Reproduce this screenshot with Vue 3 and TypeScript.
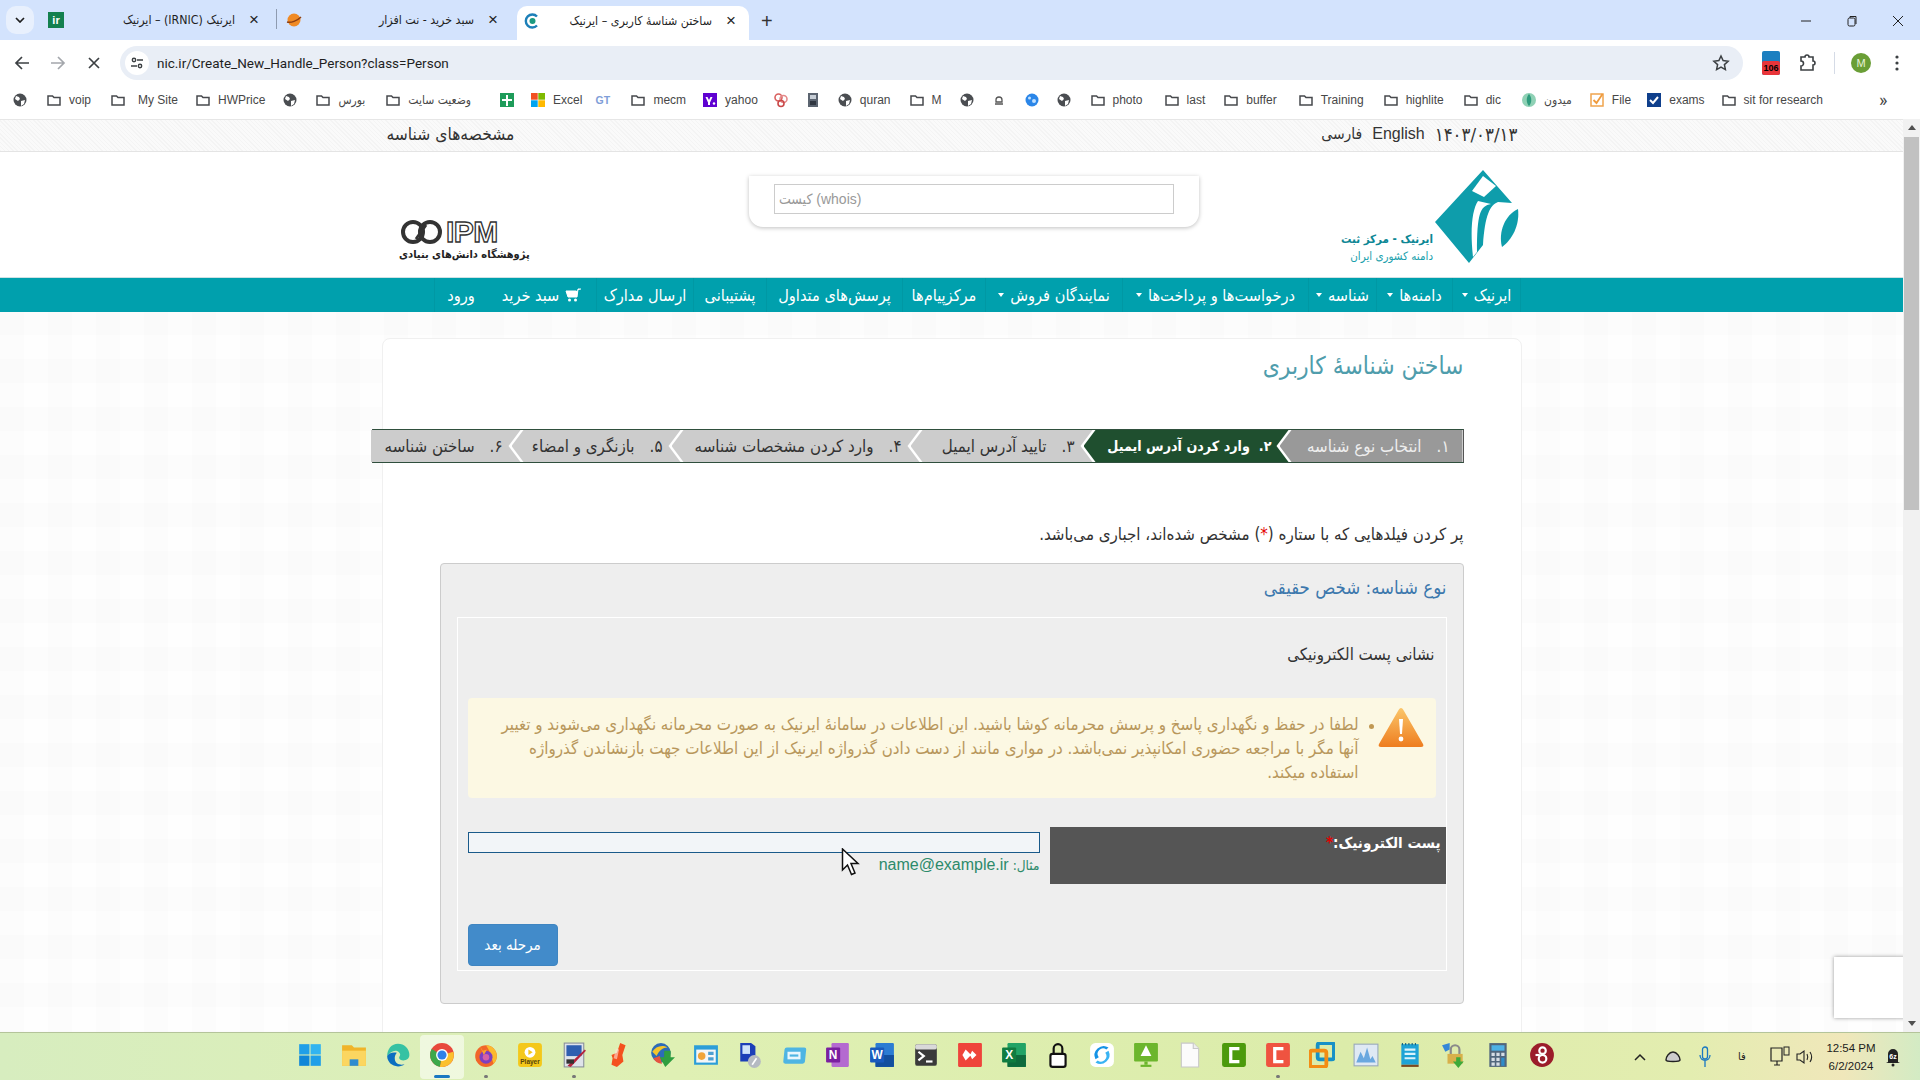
<script setup lang="ts">
interface Bookmark {
  icon: string
  label?: string
  gap: number
  pad?: number
}

const folder = '<path d="M2 4h4.5l1.5 1.6h6V13H2z" fill="none" stroke="#47494d" stroke-width="1.5"/>'
const globe = '<circle cx="8" cy="8" r="6.5" fill="#4a4d51"/><path d="M4 4l3 1 1 2-2 2-3-2zM9 9l4-1-1 4-3 2z" fill="#fff"/>'
const bookmarkIcons: Record<string, string> = {
  folder,
  globe,
  sheet: '<rect x="1" y="1" width="14" height="14" fill="#1e9c5a"/><path d="M7 3h2v4h4v2H9v5H7V9H3V7h4z" fill="#fff"/>',
  ms: '<rect x="1" y="1" width="6.7" height="6.7" fill="#f25022"/><rect x="8.3" y="1" width="6.7" height="6.7" fill="#7fba00"/><rect x="1" y="8.3" width="6.7" height="6.7" fill="#00a4ef"/><rect x="8.3" y="8.3" width="6.7" height="6.7" fill="#ffb900"/>',
  gt: '<text x="0.500" y="12" font-size="10.500" font-family="Liberation Sans" font-weight="700" fill="#7f9ed8">GT</text>',
  yahoo: '<rect x="1" y="1" width="14" height="14" fill="#5f01d1"/><path d="M3.500 5h2l1.500 3 1.500-3h2L8 10.500V13H6v-2.500z" fill="#fff"/><circle cx="12" cy="11.500" r="1.200" fill="#fff"/>',
  rings: '<circle cx="5.500" cy="5.500" r="3.500" fill="none" stroke="#d9605f" stroke-width="1.600"/><circle cx="10.500" cy="7" r="3.500" fill="none" stroke="#e58a8a" stroke-width="1.600"/><circle cx="8" cy="11.500" r="3" fill="none" stroke="#c94848" stroke-width="1.600"/>',
  film: '<rect x="3" y="1" width="10" height="14" fill="#5b6470"/><rect x="5" y="3" width="6" height="4" fill="#c7ced6"/><rect x="5" y="9" width="6" height="4" fill="#2f3640"/>',
  masjid: '<path d="M5 8a3 3 0 0 1 6 0v2H5z" fill="none" stroke="#555" stroke-width="1.300"/><path d="M4 12h8" stroke="#555" stroke-width="1.500"/>',
  dots: '<circle cx="8" cy="8" r="6.500" fill="#2b86e8"/><circle cx="5.500" cy="6" r="1.500" fill="#bfe0ff"/><circle cx="10" cy="9" r="2" fill="#bfe0ff"/>',
  leaf: '<circle cx="8" cy="8" r="7" fill="#8fd1b5"/><path d="M8 2c3 3 3 9 0 12-3-3-3-9 0-12z" fill="#2e9c7d"/>',
  check: '<rect x="2" y="2" width="12" height="12" fill="#fff" stroke="#f0a44d" stroke-width="1.500"/><path d="M4.500 8l3 3 6-9" fill="none" stroke="#ef9a3c" stroke-width="1.800"/>',
  exams: '<rect x="1" y="1" width="14" height="14" fill="#0f3f8c"/><path d="M4 8l3 3 5-6" fill="none" stroke="#fff" stroke-width="2"/>',
}

const bookmarks: Bookmark[] = [
  { icon: 'globe', gap: 18 },
  { icon: 'folder', label: 'voip', gap: 19 },
  { icon: 'folder', label: 'My Site', gap: 17, pad: 5 },
  { icon: 'folder', label: 'HWPrice', gap: 17 },
  { icon: 'globe', gap: 17 },
  { icon: 'folder', label: 'بورس', gap: 20 },
  { icon: 'folder', label: 'وضعیت سایت', gap: 28 },
  { icon: 'sheet', gap: 15 },
  { icon: 'ms', label: 'Excel', gap: 13 },
  { icon: 'gt', gap: 19 },
  { icon: 'folder', label: 'mecm', gap: 16 },
  { icon: 'yahoo', label: 'yahoo', gap: 15 },
  { icon: 'rings', gap: 16 },
  { icon: 'film', gap: 16 },
  { icon: 'globe', label: 'quran', gap: 18 },
  { icon: 'folder', label: 'M', gap: 17 },
  { icon: 'globe', gap: 16 },
  { icon: 'masjid', gap: 17 },
  { icon: 'dots', gap: 16 },
  { icon: 'globe', gap: 18 },
  { icon: 'folder', label: 'photo', gap: 21 },
  { icon: 'folder', label: 'last', gap: 18 },
  { icon: 'folder', label: 'buffer', gap: 21 },
  { icon: 'folder', label: 'Training', gap: 19 },
  { icon: 'folder', label: 'highlite', gap: 19 },
  { icon: 'folder', label: 'dic', gap: 20 },
  { icon: 'leaf', label: 'میدون', gap: 17 },
  { icon: 'check', label: 'File', gap: 15 },
  { icon: 'exams', label: 'exams', gap: 16 },
  { icon: 'folder', label: 'sit for research', gap: 0 },
]

const navItems = [
  { label: 'ایرنیک', caret: true },
  { label: 'دامنه‌ها', caret: true },
  { label: 'شناسه', caret: true },
  { label: 'درخواست‌ها و پرداخت‌ها', caret: true },
  { label: 'نمایندگان فروش', caret: true },
  { label: 'مرکزپیام‌ها', caret: false },
  { label: 'پرسش‌های متداول', caret: false },
  { label: 'پشتیبانی', caret: false },
  { label: 'ارسال مدارک', caret: false },
  { label: 'سبد خرید', caret: false, cart: true },
  { label: 'ورود', caret: false },
]

const steps = [
  { num: '۱.', label: 'انتخاب نوع شناسه', width: 183, state: 'done' },
  { num: '۲.', label: 'وارد کردن آدرس ایمیل', width: 205, state: 'active' },
  { num: '۳.', label: 'تایید آدرس ایمیل', width: 182, state: '' },
  { num: '۴.', label: 'وارد کردن مشخصات شناسه', width: 248, state: '' },
  { num: '۵.', label: 'بازنگری و امضاء', width: 169, state: '' },
  { num: '۶.', label: 'ساختن شناسه', width: 150, state: '' },
]

const taskIcons = [
  { svg: '<rect x="2" y="2" width="9.500" height="9.500" fill="#1f9fe8"/><rect x="12.500" y="2" width="9.500" height="9.500" fill="#32b4f0"/><rect x="2" y="12.500" width="9.500" height="9.500" fill="#0f86d8"/><rect x="12.500" y="12.500" width="9.500" height="9.500" fill="#1f9fe8"/>' },
  { svg: '<path d="M1 3h9l2 2h11v17H1z" fill="#f0b429"/><path d="M1 8h22v14H1z" fill="#fbd660"/><rect x="8" y="16" width="8" height="6" fill="#2e8ccf"/>' },
  { svg: '<path d="M12 1.500a10.500 10.500 0 0 1 10.500 10.500c0 3-2.500 5-5.500 5-2 0-4-1-4-2.500 0-1 1-1.500 1-3S12 8 9.500 8 4 10 2 13C2 6.500 6 1.500 12 1.500z" fill="#36c2a3"/><path d="M2 13c0 5.500 4.500 9.500 10 9.500 2.500 0 4.500-.8 6-2-3 1-9 .5-9-5.500 0-3 2-5 2-5-4-1-8 .5-9 3z" fill="#0b6fc0"/>' },
  { svg: '<circle cx="12" cy="12" r="11" fill="#e8483b"/><path d="M12 12L22.500 9A11 11 0 0 1 10 22.800z" fill="#fbc02d"/><path d="M12 12L10 22.800A11 11 0 0 1 2.500 6.500z" fill="#3da84a"/><circle cx="12" cy="12" r="5.500" fill="#fff"/><circle cx="12" cy="12" r="4.200" fill="#2f80e8"/>', dot: 'active' },
  { svg: '<circle cx="12" cy="13" r="10" fill="#f1662a"/><path d="M12 3a10 10 0 0 1 10 10c0 3-1 5-3 7L15 8z" fill="#fbb92f"/><circle cx="12" cy="14" r="6" fill="#7d3fc0"/><circle cx="12" cy="14" r="3" fill="#d65fa6"/><path d="M6 3l3 5 4-1-3 5z" fill="#f9a22b"/>', dot: 'dot' },
  { svg: '<rect x="1" y="1" width="22" height="22" rx="3" fill="#f4c81a"/><circle cx="12" cy="9.500" r="5" fill="#fff"/><path d="M10.500 7l4 2.500-4 2.500z" fill="#f4c81a"/><text x="12" y="20" text-anchor="middle" font-size="6" font-family="Liberation Sans" font-weight="700" fill="#54430a">Player</text>' },
  { svg: '<rect x="3" y="1" width="18" height="22" fill="#dfe3ea" stroke="#89909c"/><rect x="5" y="3" width="14" height="10" fill="#2f5fb0"/><path d="M6 22L22 7l1 1L9 23z" fill="#b5233c"/><rect x="5" y="16" width="7" height="4" fill="#333"/>', dot: 'dot' },
  { svg: '<path d="M14 1l5 2-3 9 1 6-6 5-5-2 1-6-1-3 5-2z" fill="#f4511e"/><path d="M10 6l3 1-2 9-3-1z" fill="#ffe2d6" opacity=".6"/>' },
  { svg: '<circle cx="11" cy="10" r="9" fill="#2c6bb8"/><path d="M3 9c3-5 9-7 14-4-4 0-8 3-10 8z" fill="#f4c52c"/><path d="M4 15c2 3 4 5 8 5l-2-7z" fill="#e65340"/><path d="M10 14h4V8h6v6h4l-9 9z" fill="#2f9e3f"/>' },
  { svg: '<rect x="1" y="3" width="22" height="18" fill="#2c9ed8"/><rect x="3" y="7" width="18" height="12" fill="#f4f6f7"/><circle cx="8" cy="13" r="3.500" fill="#f0a43a"/><path d="M14 9h5v3h-5zM14 14h5v3h-5z" fill="#4d9fd1"/>' },
  { svg: '<path d="M3 1h10l4 3v14H3z" fill="#1c3fb8"/><path d="M5 3h7v8H5z" fill="#cfe3fb"/><circle cx="16" cy="18" r="6" fill="#b5bac2"/><path d="M14 21l4-6" stroke="#fff" stroke-width="1.500"/>' },
  { svg: '<rect x="2" y="5" width="20" height="15" rx="2" fill="#4eb5e3" transform="skewX(-6) translate(2 0)"/><rect x="6" y="9" width="12" height="7" fill="#e9f7fd"/><rect x="8" y="11.500" width="8" height="2" fill="#4eb5e3"/>' },
  { svg: '<rect x="6" y="1" width="16" height="22" rx="1" fill="#b46ad0"/><rect x="1" y="5" width="13" height="14" rx="1" fill="#7a1fa0"/><text x="7.500" y="16" text-anchor="middle" font-size="11" font-family="Liberation Sans" font-weight="700" fill="#fff">N</text>' },
  { svg: '<rect x="6" y="1" width="17" height="22" rx="1" fill="#2b7cd3"/><rect x="6" y="12" width="17" height="11" fill="#124f9e"/><rect x="1" y="5" width="13" height="14" rx="1" fill="#185abd"/><text x="7.500" y="16" text-anchor="middle" font-size="11" font-family="Liberation Sans" font-weight="700" fill="#fff">W</text>' },
  { svg: '<rect x="2" y="2" width="20" height="20" rx="2" fill="#3a3a3a"/><rect x="2" y="2" width="20" height="5" rx="2" fill="#d9d9d9"/><path d="M5 9l5 4-5 4" fill="none" stroke="#fff" stroke-width="2"/><path d="M12 18h6" stroke="#fff" stroke-width="2"/>' },
  { svg: '<rect x="1" y="1" width="22" height="22" rx="1" fill="#ef443b"/><path d="M8 7l5 5-5 5-3-5zM14 8l4 4-4 4-2-4z" fill="#fff"/>' },
  { svg: '<rect x="6" y="1" width="17" height="22" rx="1" fill="#21a366"/><rect x="6" y="12" width="17" height="11" fill="#0e6b3d"/><rect x="1" y="5" width="13" height="14" rx="1" fill="#107c41"/><text x="7.500" y="16" text-anchor="middle" font-size="11" font-family="Liberation Sans" font-weight="700" fill="#fff">X</text>' },
  { svg: '<path d="M8 11V6a4 4 0 0 1 8 0v5" fill="none" stroke="#111" stroke-width="2"/><rect x="5" y="11" width="14" height="12" rx="2" fill="#fff" stroke="#111" stroke-width="2"/>' },
  { svg: '<rect x="1" y="1" width="22" height="22" rx="5" fill="#fff"/><path d="M18 5a8.500 8.500 0 0 0-12 11l3-2a5 5 0 0 1 7-7z" fill="#1593e6"/><path d="M6 19a8.500 8.500 0 0 0 12-11l-3 2a5 5 0 0 1-7 7z" fill="#39b3f3"/>' },
  { svg: '<rect x="1" y="1" width="22" height="17" rx="1" fill="#6cb62d"/><path d="M12 3l5 10H7z" fill="#fff"/><rect x="10.500" y="18" width="3" height="3" fill="#6cb62d"/><rect x="7" y="21" width="10" height="2" fill="#6cb62d"/>' },
  { svg: '<path d="M4 1h11l5 5v17H4z" fill="#fbfbfb" stroke="#c8c8c8"/><path d="M15 1v5h5" fill="#eee" stroke="#c8c8c8"/>' },
  { svg: '<rect x="1" y="1" width="22" height="22" rx="2" fill="#4c9a0c"/><path d="M17 6h-8v12h8" fill="none" stroke="#fff" stroke-width="3"/>' },
  { svg: '<rect x="1" y="1" width="22" height="22" rx="2" fill="#ef5340"/><path d="M17 6h-8v12h8" fill="none" stroke="#fff" stroke-width="3"/>', dot: 'dot' },
  { svg: '<rect x="8" y="1" width="15" height="15" rx="2" fill="none" stroke="#1791c7" stroke-width="3.500"/><rect x="1" y="8" width="15" height="15" rx="2" fill="none" stroke="#f38d14" stroke-width="3.500"/>' },
  { svg: '<rect x="1" y="2" width="22" height="20" fill="#dfe9f4" stroke="#97a8bc"/><path d="M3 19l4-10 3 6 3-10 3 11 2-3 3 6z" fill="#6aa8df"/>' },
  { svg: '<rect x="4" y="2" width="16" height="19" fill="#1ea3d6"/><rect x="4" y="21" width="16" height="2" fill="#7b4a21"/><path d="M7 7h10M7 11h10M7 15h10" stroke="#d9f3fc" stroke-width="2"/><path d="M5 1v2M8 1v2M11 1v2M14 1v2M17 1v2" stroke="#125e80"/>' },
  { svg: '<path d="M1 3l7-2v6L4 9z" fill="#3487d8"/><path d="M9 11V7a4 4 0 0 1 8 0v4" fill="none" stroke="#8a8a8a" stroke-width="2"/><rect x="6" y="11" width="14" height="9" fill="#d8b04a"/><path d="M14 14h4v4h3l-5 6-5-6h3z" fill="#3eaa3a"/>' },
  { svg: '<rect x="4" y="1" width="16" height="22" fill="#50667c"/><rect x="6" y="3" width="12" height="5" fill="#4db2e6"/><path d="M6 10h3v3H6zM10.500 10h3v3h-3zM15 10h3v3h-3zM6 14.500h3v3H6zM10.500 14.500h3v3h-3zM6 19h3v3H6zM10.500 19h3v3h-3z" fill="#d5dde5"/><rect x="15" y="14.500" width="3" height="7.500" fill="#2e8cc9"/>' },
  { svg: '<circle cx="12" cy="12" r="11" fill="#9b1c2a"/><circle cx="12.500" cy="8" r="3" fill="none" stroke="#fff" stroke-width="2"/><circle cx="12.500" cy="15.500" r="3.500" fill="none" stroke="#fff" stroke-width="2"/><path d="M6 12h4" stroke="#fff" stroke-width="2"/>' },
]
</script>

<template>
  <div class="screen">
    <div class="tabstrip">
      <div class="tab-menu">
        <svg width="10" height="6" viewBox="0 0 10 6"><path d="M1 1l4 4 4-4" fill="none" stroke="#1f1f1f" stroke-width="1.700" /></svg>
      </div>
      <div class="tab tab--one">
        <span class="fav fav--ir">ir</span>
        <span class="tab-title">ایرنیک (IRNIC) – ایرنیک</span>
        <span class="tab-close">×</span>
      </div>
      <i class="tab-sep"></i>
      <div class="tab tab--two">
        <svg class="fav" width="16" height="16" viewBox="0 0 16 16"><circle cx="8" cy="8" r="6.500" fill="#f08a24" /><path d="M1 10c4 1 10-1 14-5" fill="none" stroke="#8d3f12" stroke-width="1.500" /></svg>
        <span class="tab-title">سبد خرید - نت افزار</span>
        <span class="tab-close">×</span>
      </div>
      <div class="tab tab--active">
        <svg class="fav" width="16" height="16" viewBox="0 0 16 16"><path d="M13 3.500a6.500 6.500 0 1 0 0 9" fill="none" stroke="#1c7fb8" stroke-width="2.400" /><circle cx="8.500" cy="8" r="3" fill="#1d9a80" /></svg>
        <span class="tab-title">ساختن شناسهٔ کاربری – ایرنیک</span>
        <span class="tab-close">×</span>
      </div>
      <span class="tab-new">+</span>
      <div class="win-controls">
        <svg width="12" height="12" viewBox="0 0 12 12"><path d="M1 6h10" stroke="#222" /></svg>
        <svg width="12" height="12" viewBox="0 0 12 12"><rect x="2" y="3" width="7" height="8" rx="1.500" fill="none" stroke="#222" /><path d="M4 3V1.500h6V9" fill="none" stroke="#222" /></svg>
        <svg width="12" height="12" viewBox="0 0 12 12"><path d="M1 1l10 10M11 1L1 11" stroke="#222" /></svg>
      </div>
    </div>

    <div class="toolbar">
      <svg class="tool" width="16" height="16" viewBox="0 0 16 16"><path d="M15 8H2M8 2L2 8l6 6" fill="none" stroke="#3c4043" stroke-width="1.700" /></svg>
      <svg class="tool" width="16" height="16" viewBox="0 0 16 16"><path d="M1 8h13M8 2l6 6-6 6" fill="none" stroke="#a4a7ac" stroke-width="1.700" /></svg>
      <svg class="tool" width="16" height="16" viewBox="0 0 16 16"><path d="M3 3l10 10M13 3L3 13" fill="none" stroke="#3c4043" stroke-width="1.700" /></svg>
      <div class="omnibox">
        <span class="site-btn">
          <svg width="16" height="16" viewBox="0 0 16 16"><g fill="none" stroke="#3c4043" stroke-width="1.400"><circle cx="5" cy="5" r="1.700" /><path d="M8 5h6M2 11h6" /><circle cx="11" cy="11" r="1.700" /></g></svg>
        </span>
        <span class="url">nic.ir/Create_New_Handle_Person?class=Person</span>
        <svg class="star" width="18" height="18" viewBox="0 0 18 18"><path d="M9 2l2.100 4.600 5 .6-3.700 3.400 1 5L9 13.100 4.600 15.600l1-5L1.900 7.200l5-.6z" fill="none" stroke="#3c4043" stroke-width="1.500" /></svg>
      </div>
      <div class="ext ext--badge"><i></i><b>106</b></div>
      <svg class="ext" width="18" height="20" viewBox="0 0 18 20"><path d="M3 4h4a2 2 0 0 1 4 0h4v4a2 2 0 0 1 0 4v5H3v-4a2 2 0 0 0 0-5z" fill="none" stroke="#3c4043" stroke-width="1.600" /></svg>
      <i class="tool-sep"></i>
      <span class="avatar">M</span>
      <svg class="kebab" width="4" height="16" viewBox="0 0 4 16"><circle cx="2" cy="2" r="1.600" fill="#3c4043" /><circle cx="2" cy="8" r="1.600" fill="#3c4043" /><circle cx="2" cy="14" r="1.600" fill="#3c4043" /></svg>
    </div>

    <div class="bookmarks">
      <span
        v-for="(b, i) in bookmarks"
        :key="i"
        class="bookmark"
        :style="{ marginRight: b.gap + 'px', gap: 7 + (b.pad ?? 0) + 'px' }"
      >
        <svg width="16" height="16" viewBox="0 0 16 16" v-html="bookmarkIcons[b.icon]"></svg>
        <span v-if="b.label" class="bookmark-label">{{ b.label }}</span>
      </span>
      <span class="bookmark-more">»</span>
    </div>

    <div class="viewport">
      <div class="page" dir="rtl">
        <div class="topstrip">
          <div class="container topstrip-row">
            <div class="topstrip-links">
              <span class="topstrip-date">۱۴۰۳/۰۳/۱۳</span>
              <span class="latin">English</span>
              <span>فارسی</span>
            </div>
            <span class="topstrip-title">مشخصه‌های شناسه</span>
          </div>
        </div>

        <header class="container masthead">
          <div class="irnic-logo">
            <svg width="85" height="97" viewBox="115 8 85 97">
              <path d="M163 10L192 43L178 42C170 45 165 55 163 85L149 103L115 62Z" fill="#0e9dab" />
              <path d="M152 31L163 16L176 26L164 37Z" fill="#fff" />
              <path d="M171 44C160 46 157 54 157 92L153 97C150 70 152 50 158 41Z" fill="#fff" />
              <path d="M198 49C200 65 192 80 182 87C178 72 185 55 198 49Z" fill="#0e9dab" />
            </svg>
            <div class="irnic-text"><b>ایرنیک - مرکز ثبت</b><span>دامنه کشوری ایران</span></div>
          </div>
          <div class="whois"><input class="whois-input" placeholder="(whois) کیست" /></div>
          <div class="ipm-logo" dir="ltr">
            <div class="ipm-mark">
              <svg width="45" height="24" viewBox="0 0 45 24">
                <circle cx="14" cy="12" r="10" fill="none" stroke="#333" stroke-width="4" />
                <circle cx="31" cy="12" r="10" fill="none" stroke="#333" stroke-width="4" />
                <path d="M17 19L27 5" stroke="#333" stroke-width="3" />
              </svg>
              <span class="ipm-letters">IPM</span>
            </div>
            <span class="ipm-sub" dir="rtl">پژوهشگاه دانش‌های بنیادی</span>
          </div>
        </header>

        <nav class="mainnav">
          <div class="mainnav-row">
            <a v-for="item in navItems" :key="item.label" class="mainnav-item">
              <svg v-if="item.cart" width="16" height="14" viewBox="0 0 16 14"><path d="M16 1h-3l-1 8H3L1 3h10" fill="#fff" stroke="#fff" /><circle cx="10.500" cy="12" r="1.500" fill="#fff" /><circle cx="4.500" cy="12" r="1.500" fill="#fff" /></svg>
              {{ item.label }}
              <i v-if="item.caret" class="caret"></i>
            </a>
          </div>
        </nav>

        <main class="container card">
          <h1 class="card-title">ساختن شناسهٔ کاربری</h1>

          <ol class="steps">
            <li
              v-for="(s, i) in steps"
              :key="s.num"
              :class="['step', s.state && 'step--' + s.state, { 'step--first': i === 0, 'step--last': i === steps.length - 1 }]"
              :style="{ width: s.width + 'px' }"
            >
              <span class="step-num">{{ s.num }}</span>
              <span>{{ s.label }}</span>
            </li>
          </ol>

          <p class="required-note">پر کردن فیلدهایی که با ستاره (<em>*</em>) مشخص شده‌اند، اجباری می‌باشد.</p>

          <section class="box">
            <h2 class="box-title">نوع شناسه: شخص حقیقی</h2>
            <div class="box-inner">
              <h3 class="box-sub">نشانی پست الکترونیکی</h3>
              <div class="alert">
                <svg class="alert-icon" width="46" height="41" viewBox="0 0 46 41">
                  <defs>
                    <linearGradient id="warn" x1="0" y1="0" x2="0" y2="1">
                      <stop offset="0" stop-color="#fbc66a" />
                      <stop offset="1" stop-color="#ee7d1f" />
                    </linearGradient>
                  </defs>
                  <path d="M23 1c1 0 2 1 3 3l19 33c1 2 0 3-2 3H3c-2 0-3-1-2-3L20 4c1-2 2-3 3-3z" fill="url(#warn)" />
                  <path d="M21 12h4l-1 15h-2z" fill="#fff" />
                  <circle cx="23" cy="32" r="2.400" fill="#fff" />
                </svg>
                <i class="alert-bullet"></i>
                <div class="alert-text">
                  <span>لطفا در حفظ و نگهداری پاسخ و پرسش محرمانه کوشا باشید. این اطلاعات در سامانهٔ ایرنیک به صورت محرمانه نگهداری می‌شوند و تغییر</span>
                  <span>آنها مگر با مراجعه حضوری امکانپذیر نمی‌باشد. در مواری مانند از دست دادن گذرواژه ایرنیک از این اطلاعات جهت بازنشاندن گذرواژه</span>
                  <span>استفاده میکند.</span>
                </div>
              </div>
              <div class="field">
                <label class="field-label">پست الکترونیک:<em>*</em></label>
                <div class="field-control">
                  <input class="field-input" />
                  <div class="field-hint"><small>مثال:</small> <span dir="ltr">name@example.ir</span></div>
                </div>
              </div>
              <button class="next-btn" type="button">مرحله بعد</button>
            </div>
          </section>
        </main>

        <div class="recaptcha"></div>
        <svg class="cursor" width="20" height="28" viewBox="0 0 20 28">
          <path d="M1.500 1v21l5-5 4 9.500 3.500-1.500-4-9.500h7z" fill="#fff" stroke="#111" stroke-width="1.500" />
        </svg>
      </div>

      <div class="scrollbar">
        <i class="scroll-up"></i>
        <div class="scroll-thumb"></div>
        <i class="scroll-down"></i>
      </div>
    </div>

    <footer class="taskbar">
      <div class="task-icons">
        <span
          v-for="(t, i) in taskIcons"
          :key="i"
          :class="['task-icon', { 'is-active': t.dot === 'active', 'has-dot': t.dot === 'dot' }]"
        >
          <svg width="26" height="26" viewBox="0 0 24 24" v-html="t.svg"></svg>
        </span>
      </div>
      <div class="tray">
        <svg class="tray-chev" width="12" height="8" viewBox="0 0 12 8"><path d="M1 7l5-5 5 5" fill="none" stroke="#222" stroke-width="1.500" /></svg>
        <svg class="tray-cloud" width="18" height="14" viewBox="0 0 18 14"><path d="M2 10c0-3 3-8 7-8s7 5 7 8c0 2-14 2-14 0z" fill="#ccc" stroke="#222" stroke-width="1.500" /></svg>
        <svg class="tray-mic" width="12" height="22" viewBox="0 0 12 22"><rect x="3.500" y="1" width="5" height="12" rx="2.500" fill="none" stroke="#1a78c2" stroke-width="1.300" /><path d="M1 9c0 7 10 7 10 0M6 15v6" fill="none" stroke="#1a78c2" stroke-width="1.300" /></svg>
        <span class="tray-lang">فا</span>
        <svg class="tray-net" width="20" height="22" viewBox="0 0 20 22"><path d="M1 2h11v13H1zM4 19h6M7 15v4" fill="none" stroke="#222" stroke-width="1.200" /><rect x="14" y="1" width="5" height="8" fill="none" stroke="#222" /></svg>
        <svg class="tray-vol" width="18" height="16" viewBox="0 0 18 16"><path d="M1 5h3l4-3v12l-4-3H1zM11 5c1 2 1 4 0 6M14 3c2 3 2 7 0 10" fill="none" stroke="#222" stroke-width="1.100" /></svg>
        <div class="tray-clock"><span>12:54 PM</span><span>6/2/2024</span></div>
        <svg class="tray-bell" width="16" height="20" viewBox="0 0 16 20"><path d="M3 15V7a5 5 0 0 1 10 0v8l2 1H1z" fill="#222" /><circle cx="8" cy="18" r="1.500" fill="#222" /><text x="8" y="12" text-anchor="middle" font-size="7" font-family="Liberation Sans" font-weight="700" fill="#fff">6z</text></svg>
      </div>
    </footer>
  </div>
</template>

<style scoped>
.screen {
  width: 1920px;
  height: 1080px;
  display: flex;
  flex-direction: column;
  overflow: hidden;
  font-family: "Liberation Sans", "DejaVu Sans", sans-serif;
  background: #fff;
}

.tabstrip {
  height: 40px;
  flex: none;
  background: #d3e3fd;
  display: flex;
  align-items: flex-end;
  position: relative;
  font-size: 12px;
  color: #1f1f1f;
}

.tab-menu {
  width: 28px;
  height: 28px;
  margin: 0 0 6px 6px;
  border-radius: 10px;
  background: #e8f0fd;
  display: flex;
  align-items: center;
  justify-content: center;
}

.tab {
  height: 34px;
  display: flex;
  align-items: center;
  flex: none;
  position: relative;
}

.tab--one {
  width: 231px;
  margin-left: 7px;
  padding: 0 0 6px 7px;
  height: 34px;
  box-sizing: border-box;
}

.tab-sep {
  width: 1px;
  height: 20px;
  background: #8e9bb0;
  margin: 0 0 11px 4px;
}

.tab--two {
  width: 240px;
  padding: 0 0 6px 9px;
  box-sizing: border-box;
}

.tab--two .tab-close {
  margin-right: 15px;
}

.tab--active {
  width: 232px;
  background: #fff;
  border-radius: 10px 10px 0 0;
  padding: 0 0 4px 7px;
  box-sizing: border-box;
}

.fav {
  width: 16px;
  height: 16px;
  flex: none;
}

.fav--ir {
  background: #13804f;
  color: #fff;
  font: 700 11px/16px "Liberation Sans", sans-serif;
  text-align: center;
}

.tab-title {
  flex: 1;
  text-align: right;
  font-family: "DejaVu Sans Condensed", "DejaVu Sans", sans-serif;
  font-size: 12.300px;
  white-space: nowrap;
  direction: rtl;
  padding-right: 10px;
}

.tab-close {
  width: 18px;
  text-align: center;
  font-size: 17px;
  line-height: 16px;
  margin-right: 9px;
}

.tab-new {
  font-size: 20px;
  line-height: 22px;
  margin: 0 0 8px 12px;
  color: #333;
}

.win-controls {
  position: absolute;
  top: 15px;
  right: 16px;
  display: flex;
  gap: 34px;
}

.toolbar {
  height: 46px;
  flex: none;
  background: #fff;
  border-radius: 10px 10px 0 0;
  display: flex;
  align-items: center;
  position: relative;
  padding-left: 14px;
  box-sizing: border-box;
}

.tool {
  margin-right: 20px;
  flex: none;
}

.omnibox {
  width: 1623px;
  height: 34px;
  background: #e9eef6;
  border-radius: 17px;
  display: flex;
  align-items: center;
  flex: none;
  margin-left: -2px;
}

.site-btn {
  width: 24px;
  height: 24px;
  margin-left: 5px;
  background: #fff;
  border-radius: 50%;
  display: flex;
  align-items: center;
  justify-content: center;
}

.url {
  margin-left: 8px;
  font-family: Roboto, "Liberation Sans", sans-serif;
  font-size: 13.500px;
  color: #1f1f1f;
  flex: 1;
}

.star {
  margin-right: 13px;
}

.ext {
  flex: none;
}

.ext--badge {
  width: 18px;
  height: 24px;
  margin-left: 19px;
  position: relative;
  background: #1c7fc0;
  border-radius: 2px;
}

.ext--badge b {
  position: absolute;
  left: 0;
  right: 0;
  bottom: 0;
  height: 14px;
  background: #e9353a;
  border-radius: 2px;
  color: #000;
  font: 700 9px/14px "Liberation Sans", sans-serif;
  text-align: center;
}

.toolbar > svg.ext {
  margin-left: 18px;
}

.tool-sep {
  width: 1px;
  height: 22px;
  background: #d5dbe6;
  margin-left: 18px;
}

.avatar {
  width: 20px;
  height: 20px;
  margin-left: 16px;
  border-radius: 50%;
  background: #6a9e36;
  color: #e8f3d8;
  font: 11px/20px "Liberation Sans", sans-serif;
  text-align: center;
  flex: none;
}

.kebab {
  margin-left: 24px;
  flex: none;
}

.bookmarks {
  height: 33px;
  flex: none;
  display: flex;
  align-items: center;
  padding: 0 0 6px 12px;
  box-sizing: border-box;
  background: #fff;
  position: relative;
  font-family: Roboto, "Liberation Sans", sans-serif;
  font-size: 12px;
  color: #474747;
}

.bookmark {
  display: flex;
  align-items: center;
  flex: none;
  white-space: nowrap;
}

.bookmark-label {
  font-family: "Liberation Sans", "DejaVu Sans Condensed", sans-serif;
}

.bookmark-more {
  position: absolute;
  left: 1879px;
  font-size: 18px;
  line-height: 18px;
}

.viewport {
  flex: 1;
  min-height: 0;
  display: flex;
  overflow: hidden;
}

.page {
  flex: 1;
  position: relative;
  overflow: hidden;
  font-family: "DejaVu Sans Condensed", "DejaVu Sans", sans-serif;
  color: #333;
  font-size: 14px;
  background-color: #fefefe;
  background-image:
    linear-gradient(90deg, rgba(0, 0, 0, 0.008) 50%, transparent 50%),
    linear-gradient(rgba(0, 0, 0, 0.008) 50%, transparent 50%);
  background-size: 48px 48px;
}

.container {
  width: 1140px;
  margin: 0 auto;
}

.topstrip {
  height: 33px;
  box-sizing: border-box;
  background: repeating-linear-gradient(45deg, #f4f4f4 0 1px, #fafafa 1px 3px);
  border-top: 1px solid #e6e6e6;
  border-bottom: 1px solid #e4e4e4;
}

.topstrip-row {
  height: 100%;
  display: flex;
  align-items: center;
  justify-content: space-between;
  padding: 0 4px 3px 5px;
  box-sizing: border-box;
  color: #333;
  font-size: 15.500px;
}

.topstrip-title {
  font-size: 17.300px;
}

.topstrip-date {
  font-size: 18.500px;
}

.topstrip-links {
  display: flex;
  align-items: center;
  gap: 10px;
}

.latin {
  font-family: "Liberation Sans", sans-serif;
  font-size: 16px;
}

.masthead {
  height: 125px;
  display: flex;
  justify-content: space-between;
  background: #fff;
  width: 1903px;
  padding: 0 381px;
  box-sizing: border-box;
}

.irnic-logo {
  display: flex;
  align-items: flex-end;
  height: 97px;
  margin: 16px 2px 0 0;
  width: 187px;
  flex: none;
}

.irnic-text {
  display: flex;
  flex-direction: column;
  font-size: 11.500px;
  line-height: 17px;
  color: #1a9fac;
  white-space: nowrap;
  margin-right: 2px;
}

.irnic-text b {
  color: #0d8795;
}

.whois {
  width: 450px;
  height: 51px;
  margin-top: 24px;
  background: #fff;
  border-radius: 0 0 14px 14px;
  box-shadow: 0 1px 4px rgba(0, 0, 0, 0.25);
  box-sizing: border-box;
  padding: 8px 25px 0;
  margin-left: 82px;
}

.whois-input {
  width: 400px;
  height: 30px;
  box-sizing: border-box;
  border: 1px solid #ccc;
  background: #fff;
  direction: rtl;
  text-align: left;
  font-family: "Liberation Sans", "DejaVu Sans Condensed", sans-serif;
  font-size: 14px;
  padding: 0 4px;
  display: block;
}

.whois-input::placeholder {
  color: #999;
}

.ipm-logo {
  display: flex;
  flex-direction: column;
  align-items: flex-start;
  margin-top: 67px;
  flex: none;
  padding-left: 18px;
  box-sizing: border-box;
  width: 152px;
}

.ipm-mark {
  display: flex;
  align-items: center;
  gap: 2px;
  height: 26px;
}

.ipm-letters {
  font-family: "Liberation Sans", sans-serif;
  font-weight: 700;
  font-size: 30px;
  line-height: 26px;
  color: #fff;
  -webkit-text-stroke: 1.300px #333;
  letter-spacing: -0.500px;
}

.ipm-sub {
  font-size: 11px;
  font-weight: 700;
  color: #222;
  white-space: nowrap;
  line-height: 16px;
  margin-top: 2px;
}

.mainnav {
  background: #00a0ad;
  height: 35px;
  border-top: 1px solid #cfe1e4;
  box-sizing: border-box;
}

.mainnav-row {
  display: grid;
  grid-template-columns: 68px 76px 68px 186px 137px 83px 136px 73px 97px 110px 53px;
  height: 100%;
  padding-right: 382px;
  justify-content: start;
}

.mainnav-item {
  display: flex;
  align-items: center;
  justify-content: center;
  gap: 6px;
  color: #fff;
  font-size: 16.200px;
  white-space: nowrap;
  border-right: 1px solid rgba(0, 60, 70, 0.08);
}

.mainnav-item:nth-child(11) {
  border-right: 0;
  border-left: 1px solid rgba(0, 60, 70, 0.08);
}

.caret {
  width: 0;
  height: 0;
  border-top: 4px solid #fff;
  border-left: 3.500px solid transparent;
  border-right: 3.500px solid transparent;
}

.card {
  margin-top: 26px;
  background: #fff;
  border: 1px solid #f0f0f0;
  border-radius: 8px 8px 0 0;
  padding: 0 57px 40px;
  height: 900px;
  box-sizing: border-box;
}

.card-title {
  margin: 0;
  padding-top: 12px;
  font-size: 24.400px;
  font-weight: 400;
  color: #4f9dac;
  line-height: 30px;
}

.steps {
  list-style: none;
  display: flex;
  height: 34px;
  margin: 48px 0 0 -68px;
  padding: 0;
  background: #fff;
  border-top: 1px solid #2f4f3d;
  border-bottom: 1px solid #2f4f3d;
  border-left: 1px solid #555;
  border-right: 1px solid #555;
  box-sizing: border-box;
}

.step {
  flex: none;
  height: 100%;
  display: flex;
  align-items: center;
  gap: 15px;
  padding-right: 18px;
  box-sizing: border-box;
  background: #ccc;
  color: #333;
  font-size: 16.800px;
  white-space: nowrap;
  clip-path: polygon(0 50%, 12px 0, 100% 0, calc(100% - 12px) 50%, 100% 100%, 12px 100%);
}

.step + .step {
  margin-right: -9px;
}

.step--first {
  clip-path: polygon(0 50%, 12px 0, 100% 0, 100% 100%, 12px 100%);
  padding-right: 13px;
}

.step--last {
  clip-path: polygon(0 0, 100% 0, calc(100% - 12px) 50%, 100% 100%, 0 100%);
}

.step--done {
  background: #999;
  color: #eee;
}

.step--active {
  background: #1f4f2f;
  color: #fff;
  font-size: 14.200px;
  font-weight: 700;
  gap: 9px;
  padding-right: 17px;
}

.required-note {
  margin: 59px 0 0;
  font-size: 16.800px;
  line-height: 24px;
  color: #333;
}

.required-note em,
.field-label em {
  color: #e30000;
  font-style: normal;
}

.box {
  margin: 17px 0 0;
  background: #eee;
  border: 1px solid #ccc;
  border-radius: 4px;
  padding: 0 16px 31px;
  box-sizing: border-box;
  height: 441px;
}

.box-title {
  margin: 0;
  height: 53px;
  font-size: 18.500px;
  font-weight: 400;
  line-height: 48px;
  color: #3c78ad;
}

.box-inner {
  border: 1px solid #fff;
  padding: 0 10px 6px;
  height: 354px;
  box-sizing: border-box;
}

.box-sub {
  margin: 0;
  padding-top: 24px;
  padding-right: 1px;
  font-size: 16.700px;
  font-weight: 400;
  line-height: 24px;
  color: #333;
}

.alert {
  margin-top: 32px;
  height: 100px;
  background: #fcf8e3;
  border-radius: 4px;
  display: flex;
  align-items: flex-start;
  padding: 8px 12px 0 0;
  box-sizing: border-box;
  color: #b8975c;
}

.alert-icon {
  flex: none;
  margin-top: 1px;
}

.alert-bullet {
  width: 5px;
  height: 5px;
  border-radius: 50%;
  background: #c09853;
  margin: 18px 4px 0 10px;
  flex: none;
}

.alert-text {
  display: flex;
  flex-direction: column;
  font-size: 16.800px;
  line-height: 24px;
  margin-top: 6px;
  white-space: nowrap;
}

.field {
  display: flex;
  margin: 29px -10px 0 0;
}

.field-label {
  width: 396px;
  height: 57px;
  flex: none;
  background: #555;
  color: #fff;
  font-size: 15px;
  font-weight: 700;
  padding: 7px 5px 0 0;
  box-sizing: border-box;
}

.field-control {
  width: 572px;
  margin-right: 10px;
  padding-top: 5px;
}

.field-input {
  display: block;
  width: 100%;
  height: 21px;
  box-sizing: border-box;
  border: 1px solid #1a5a8a;
  background: #f2f5f8;
  outline: none;
}

.field-hint {
  margin-top: 1px;
  color: #2c8a6a;
  font-size: 14px;
  line-height: 22px;
}

.field-hint small {
  font-size: 13.500px;
}

.field-hint span {
  font-family: "Liberation Sans", sans-serif;
  font-size: 16px;
}

.next-btn {
  display: block;
  width: 90px;
  height: 42px;
  margin: 40px auto 0 0;
  background: #428bca;
  border: 1px solid #3f85c1;
  border-radius: 4px;
  color: #fff;
  font-family: inherit;
  font-size: 15px;
}

.recaptcha {
  position: absolute;
  left: 1834px;
  top: 838px;
  width: 72px;
  height: 61px;
  background: #fff;
  box-shadow: 0 0 4px rgba(0, 0, 0, 0.4);
}

.cursor {
  position: absolute;
  left: 841px;
  top: 729px;
}

.scrollbar {
  width: 17px;
  flex: none;
  background: #f1f1f1;
  position: relative;
  display: flex;
  flex-direction: column;
  align-items: center;
}

.scroll-up,
.scroll-down {
  width: 0;
  height: 0;
  border-left: 4px solid transparent;
  border-right: 4px solid transparent;
  flex: none;
}

.scroll-up {
  border-bottom: 5px solid #505050;
  margin-top: 6px;
}

.scroll-down {
  border-top: 5px solid #505050;
  margin-top: auto;
  margin-bottom: 6px;
}

.scroll-thumb {
  width: 15px;
  height: 373px;
  margin-top: 7px;
  background: #c1c1c1;
}

.taskbar {
  height: 48px;
  flex: none;
  display: flex;
  align-items: center;
  border-top: 1px solid #b4c49a;
  box-sizing: border-box;
  background: linear-gradient(90deg, #d7edbf 0%, #dff0b4 35%, #dcecaa 70%, #e3edb0 88%, #f0e7ba 96%, #d3ebc4 100%);
  position: relative;
}

.task-icons {
  display: flex;
  margin-left: 288px;
}

.task-icon {
  width: 44px;
  height: 44px;
  display: flex;
  align-items: center;
  justify-content: center;
  position: relative;
  box-sizing: border-box;
  padding-bottom: 3px;
  border-radius: 4px;
}

.task-icon.is-active {
  background: rgba(255, 255, 255, 0.55);
}

.task-icon.is-active::after {
  content: "";
  position: absolute;
  left: 14px;
  right: 14px;
  bottom: 1px;
  height: 3px;
  border-radius: 2px;
  background: #1a78c2;
}

.task-icon.has-dot::after {
  content: "";
  position: absolute;
  left: 20px;
  bottom: 1px;
  width: 4px;
  height: 3px;
  border-radius: 2px;
  background: #777;
}

.tray {
  position: absolute;
  inset: 0 0 0 auto;
  width: 296px;
  display: flex;
  align-items: center;
  color: #222;
}

.tray-chev {
  margin-left: 10px;
}

.tray-cloud {
  margin-left: 18px;
}

.tray-mic {
  margin-left: 17px;
}

.tray-lang {
  margin-left: 27px;
  font-family: "DejaVu Sans Condensed", "DejaVu Sans", sans-serif;
  font-size: 11px;
  width: 14px;
}

.tray-net {
  margin-left: 18px;
}

.tray-vol {
  margin-left: 6px;
}

.tray-clock {
  display: flex;
  flex-direction: column;
  gap: 4px;
  margin-left: 9px;
  width: 56px;
  text-align: center;
  font-size: 11.500px;
  line-height: 14px;
  white-space: nowrap;
  color: #1c1c1c;
}

.tray-bell {
  margin-left: 6px;
}
</style>

<style>
html,
body {
  margin: 0;
  padding: 0;
  overflow: hidden;
}
</style>
